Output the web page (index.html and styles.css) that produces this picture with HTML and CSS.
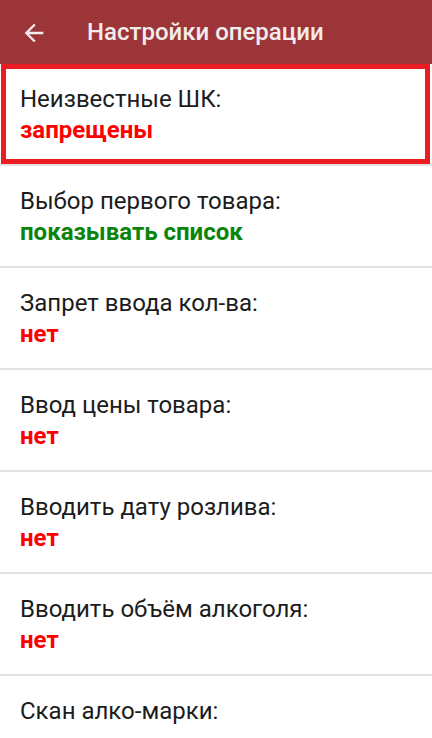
FILE: index.html
```html
<!DOCTYPE html>
<html lang="ru">
<head>
<meta charset="utf-8">
<title>Настройки операции</title>
<link rel="stylesheet" href="styles.css">
</head>
<body>
<header class="toolbar">
  <svg class="back" viewBox="0 0 24 24" width="28" height="28"><path d="M20 11H7.83l5.59-5.59L12 4l-8 8 8 8 1.41-1.41L7.83 13H20v-2z" fill="currentColor"/></svg>
  <h1 class="title">Настройки операции</h1>
</header>
<ul class="list">
  <li class="item item-marked"><div class="label">Неизвестные ШК:</div><div class="value red">запрещены</div></li>
  <li class="item"><div class="label">Выбор первого товара:</div><div class="value green">показывать список</div></li>
  <li class="item"><div class="label">Запрет ввода кол-ва:</div><div class="value red">нет</div></li>
  <li class="item"><div class="label">Ввод цены товара:</div><div class="value red">нет</div></li>
  <li class="item"><div class="label">Вводить дату розлива:</div><div class="value red">нет</div></li>
  <li class="item"><div class="label">Вводить объём алкоголя:</div><div class="value red">нет</div></li>
  <li class="item item-last"><div class="label">Скан алко-марки:</div></li>
</ul>
</body>
</html>
```
FILE: styles.css
```css
html, body {
  margin: 0;
  padding: 0;
  background: #ffffff;
  font-family: Roboto, "Noto Sans", sans-serif;
  overflow: hidden;
}
.toolbar {
  height: 64px;
  background: #9c3538;
  display: flex;
  align-items: center;
  color: #f3ecec;
}
.back {
  margin-left: 20px;
  margin-top: 2px;
  flex: none;
}
.title {
  margin: 0 0 0 39px;
  font-size: 24px;
  font-weight: 500;
}
.list {
  list-style: none;
  margin: 0;
  padding: 0;
}
.item {
  position: relative;
  height: 102px;
  box-sizing: border-box;
  padding: 20px 20px 18px;
  border-bottom: 2px solid #e3e3e3;
  font-size: 24px;
  line-height: 31px;
  white-space: nowrap;
}
.item-last {
  height: auto;
  padding-bottom: 0;
  border-bottom: none;
}
.label {
  color: #1c1c1c;
}
.value {
  font-weight: 700;
}
.red { color: #ff0000; }
.green { color: #0a840a; }
.item-marked::after {
  content: "";
  position: absolute;
  top: 0;
  left: 1px;
  right: 2px;
  bottom: 0;
  border: 5px solid #ec1c24;
}
```
